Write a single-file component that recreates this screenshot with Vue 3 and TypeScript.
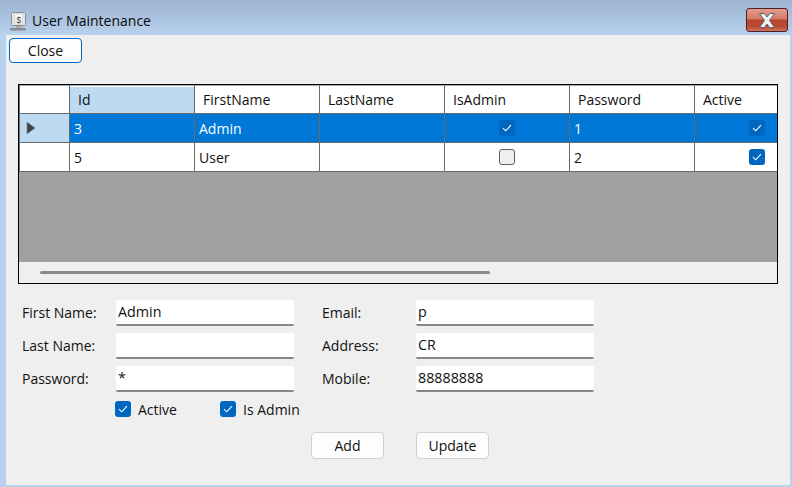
<template>
  <div class="window">
    <div class="titlebar">
      <svg class="app-icon" width="18" height="20" viewBox="0 0 18 20">
        <rect x="2.5" y="1.5" width="14" height="13" rx="1" fill="#e4e4e4" stroke="#8d8d8d" />
        <rect x="6" y="3" width="7.5" height="10" fill="#fff" stroke="#c4c4c4" stroke-width="0.5" />
        <text x="9.7" y="11.5" text-anchor="middle" class="dollar">$</text>
        <rect x="7" y="15" width="5" height="2" fill="#a8a8a8" />
        <rect x="1" y="17" width="16" height="2.5" rx="1" fill="#8c8c8c" />
      </svg>
      <span class="title">User Maintenance</span>
      <button class="win-close" type="button" aria-label="Close window">
        <svg width="20" height="17" viewBox="0 0 20 17">
          <path d="M2.5 1.5h5l2.5 3.5 2.500-3.500h5l-5 7 5 7h-5L10 12l-2.500 3.500h-5l5-7z" fill="#f1f1f1" stroke="#5a6472" stroke-width="1" stroke-linejoin="round" />
        </svg>
      </button>
    </div>

    <div class="client">
      <button class="btn btn-close" type="button">Close</button>

      <div class="dgv">
        <div class="dgv-row dgv-head">
          <div class="row-head"></div>
          <div
            v-for="col in columns"
            :key="col.key"
            class="cell head-cell"
            :class="{ current: col.key === 'id' }"
          >
            {{ col.label }}
          </div>
        </div>

        <div
          v-for="(user, i) in users"
          :key="user.id"
          class="dgv-row"
          :class="{ selected: i === 0 }"
        >
          <div class="row-head">
            <svg v-if="i === 0" width="10" height="14" viewBox="0 0 10 14">
              <path d="M1 1l8 6-8 6z" fill="#3f3f3f" stroke="#8a8a8a" stroke-width="0.8" />
            </svg>
          </div>
          <div v-for="col in columns" :key="col.key" class="cell" :class="{ 'check-cell': col.bool }">
            <span v-if="col.bool" class="check" :class="{ on: user[col.key] }">
              <svg v-if="user[col.key]" width="10" height="8" viewBox="0 0 10 8">
                <path d="M1 4.200l2.700 2.600L9 1.200" fill="none" stroke="#fff" stroke-width="1.100" />
              </svg>
            </span>
            <template v-else>{{ user[col.key] }}</template>
          </div>
        </div>

        <div class="dgv-empty"></div>
        <div class="dgv-scroll"><div class="thumb"></div></div>
      </div>

      <div class="form">
        <div class="form-col">
          <template v-for="f in leftFields" :key="f.label">
            <label>{{ f.label }}</label>
            <input type="text" :value="f.value" readonly />
          </template>
        </div>
        <div class="form-col">
          <template v-for="f in rightFields" :key="f.label">
            <label>{{ f.label }}</label>
            <input type="text" :value="f.value" readonly />
          </template>
        </div>
      </div>

      <div class="flags">
        <div class="flag">
          <span class="check on">
            <svg width="10" height="8" viewBox="0 0 10 8">
              <path d="M1 4.200l2.700 2.600L9 1.200" fill="none" stroke="#fff" stroke-width="1.100" />
            </svg>
          </span>
          Active
        </div>
        <div class="flag">
          <span class="check on">
            <svg width="10" height="8" viewBox="0 0 10 8">
              <path d="M1 4.200l2.700 2.600L9 1.200" fill="none" stroke="#fff" stroke-width="1.100" />
            </svg>
          </span>
          Is Admin
        </div>
      </div>

      <div class="actions">
        <button class="btn" type="button">Add</button>
        <button class="btn" type="button">Update</button>
      </div>
    </div>
  </div>
</template>

<script setup lang="ts">
interface User {
  id: number
  firstName: string
  lastName: string
  isAdmin: boolean
  password: string
  active: boolean
}

interface Column {
  key: keyof User
  label: string
  bool?: boolean
}

const columns: Column[] = [
  { key: 'id', label: 'Id' },
  { key: 'firstName', label: 'FirstName' },
  { key: 'lastName', label: 'LastName' },
  { key: 'isAdmin', label: 'IsAdmin', bool: true },
  { key: 'password', label: 'Password' },
  { key: 'active', label: 'Active', bool: true }
]

const users: User[] = [
  { id: 3, firstName: 'Admin', lastName: '', isAdmin: true, password: '1', active: true },
  { id: 5, firstName: 'User', lastName: '', isAdmin: false, password: '2', active: true }
]

const leftFields = [
  { label: 'First Name:', value: 'Admin' },
  { label: 'Last Name:', value: '' },
  { label: 'Password:', value: '*' }
]

const rightFields = [
  { label: 'Email:', value: 'p' },
  { label: 'Address:', value: 'CR' },
  { label: 'Mobile:', value: '88888888' }
]
</script>

<style>
html,
body {
  margin: 0;
  overflow: hidden;
}
</style>

<style scoped>
.window {
  width: 792px;
  height: 487px;
  box-sizing: border-box;
  padding: 0 2px 2px 6px;
  display: flex;
  flex-direction: column;
  background: linear-gradient(180deg, #9cb4d2 0, #b9d2ee 36px, #b9d2ee 100%);
  font-family: "Open Sans", "Noto Sans", sans-serif;
  font-size: 14px;
  color: #111;
}

.titlebar {
  height: 35px;
  flex: none;
  box-sizing: border-box;
  padding-top: 5px;
  display: flex;
  align-items: center;
  position: relative;
}

.app-icon {
  margin: 1px 0 0 3px;
}

.dollar {
  font-family: "Liberation Sans", sans-serif;
  font-size: 9px;
  fill: #444;
}

.title {
  margin: 0 0 0 5px;
  color: #0a0a0a;
}

.win-close {
  position: absolute;
  right: 2px;
  top: 8px;
  width: 42px;
  height: 24px;
  box-sizing: border-box;
  padding: 0;
  display: flex;
  align-items: center;
  justify-content: center;
  border: 1px solid #4d1f2b;
  border-radius: 3px;
  background: linear-gradient(180deg, #e79c8c 0, #d47a69 45%, #b8452c 50%, #bb4a31 80%, #cf7560 100%);
}

.client {
  flex: 1;
  background: #efefef;
  padding: 3px 0 0 3px;
}

.btn {
  display: block;
  width: 73px;
  height: 27px;
  box-sizing: border-box;
  padding: 0;
  font: inherit;
  color: #111;
  background: #fdfdfd;
  border: 1px solid #d0d0d0;
  border-radius: 4px;
}

.btn-close {
  height: 25px;
  border-color: #0067c0;
}

.dgv {
  width: 760px;
  height: 200px;
  box-sizing: border-box;
  margin: 21px 0 16px 9px;
  border: 1px solid #000;
  overflow: hidden;
  background: #fff;
}

.dgv-row {
  display: flex;
  height: 29px;
  box-sizing: border-box;
  border-bottom: 1px solid #696969;
  background: #fff;
}

.row-head {
  flex: none;
  width: 51px;
  box-sizing: border-box;
  padding: 0 0 0 6px;
  display: flex;
  align-items: center;
  border-left: 1px solid #696969;
  border-right: 1px solid #696969;
  background: #fff;
}

.cell {
  flex: none;
  width: 125px;
  box-sizing: border-box;
  padding: 0 4px;
  display: flex;
  align-items: center;
  border-right: 1px solid #696969;
}

.head-cell {
  padding-left: 8px;
  box-shadow: inset 0 1px 0 #fff;
}

.head-cell.current {
  background: #bcdaf2;
}

.dgv-head .row-head,
.dgv-head .cell {
  border-top: 1px solid #a8a8a8;
}

.check-cell {
  justify-content: center;
}

.selected .cell {
  background: #0078d7;
  color: #fff;
}

.selected .row-head {
  background: #bcdaf2;
}

.check {
  width: 16px;
  height: 16px;
  flex: none;
  box-sizing: border-box;
  display: inline-flex;
  align-items: center;
  justify-content: center;
  border: 1px solid #5f5f5f;
  border-radius: 3px;
  background: #efefef;
}

.check.on {
  border: none;
  background: #0067c0;
}

.dgv-empty {
  height: 90px;
  background: #a0a0a0;
}

.dgv-scroll {
  height: 21px;
  box-sizing: border-box;
  padding: 9px 0 0 21px;
  background: #efefef;
}

.thumb {
  width: 450px;
  height: 3px;
  border-radius: 2px;
  background: #8a8a8a;
}

.form {
  display: flex;
  gap: 28px;
  padding-left: 13px;
}

.form-col {
  display: grid;
  grid-template-columns: 94px 178px;
  grid-auto-rows: 26px;
  row-gap: 7px;
  align-items: center;
}

.form-col label {
  padding-bottom: 2px;
}

.form-col input {
  width: 178px;
  height: 26px;
  box-sizing: border-box;
  padding: 0 2px 1px;
  font: inherit;
  font-size: 14.3px;
  color: #111;
  background: #fff;
  border: none;
  border-bottom: 2px solid #868686;
  border-radius: 2px;
  outline: none;
}

.flags {
  display: flex;
  margin: 9px 0 0 106px;
  height: 16px;
}

.flag {
  width: 105px;
  display: flex;
  align-items: center;
  gap: 7px;
}

.actions {
  display: flex;
  gap: 32px;
  margin: 15px 0 0 302px;
}
</style>
